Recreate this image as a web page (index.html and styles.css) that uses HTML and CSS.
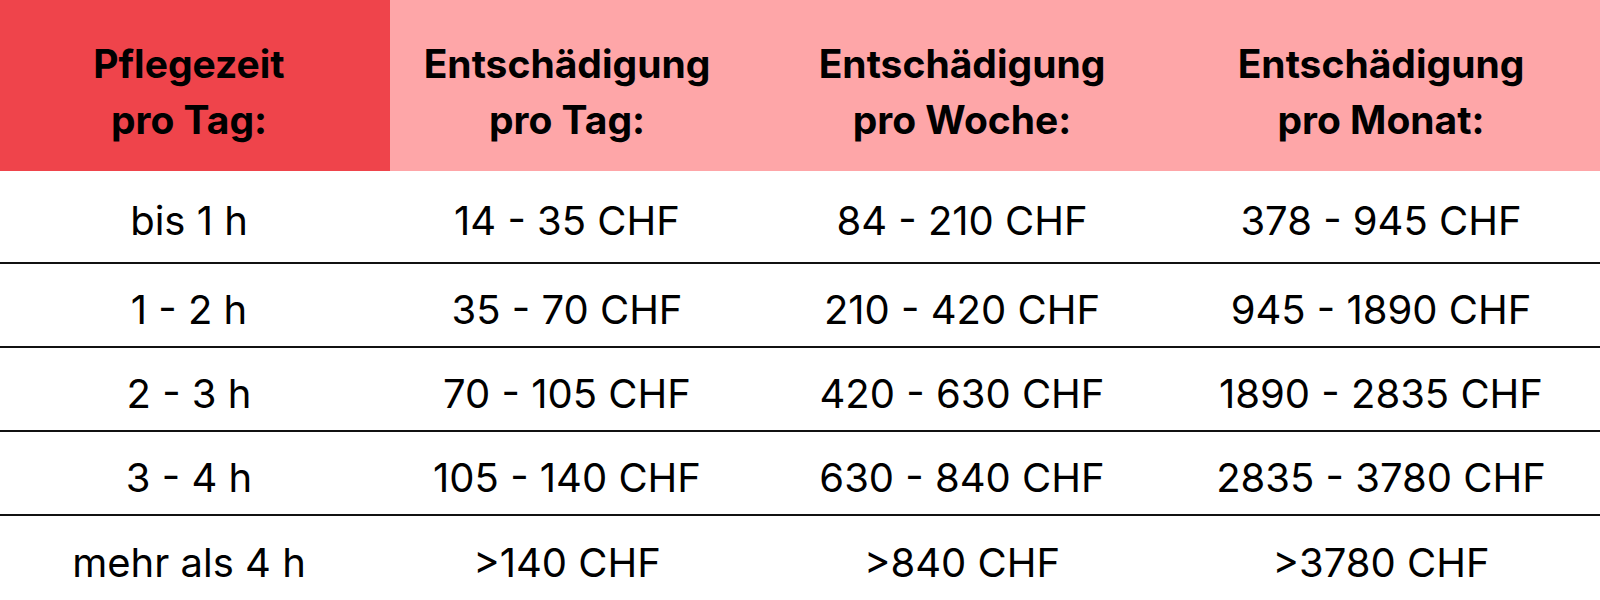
FILE: index.html
```html
<!DOCTYPE html>
<html lang="de">
<head>
<meta charset="utf-8">
<title>Entschädigung Pflegezeit</title>
<link rel="stylesheet" href="styles.css">
</head>
<body>
<div class="table">
  <div class="row head">
    <div class="cell c1 hot">Pflegezeit<br>pro Tag:</div>
    <div class="cell c2">Entschädigung<br>pro Tag:</div>
    <div class="cell c3">Entschädigung<br>pro Woche:</div>
    <div class="cell c4">Entschädigung<br>pro Monat:</div>
  </div>
  <div class="row first">
    <div class="cell c1">bis 1 h</div>
    <div class="cell c2">14 - 35 CHF</div>
    <div class="cell c3">84 - 210 CHF</div>
    <div class="cell c4">378 - 945 CHF</div>
  </div>
  <div class="row">
    <div class="cell c1">1 - 2 h</div>
    <div class="cell c2">35 - 70 CHF</div>
    <div class="cell c3">210 - 420 CHF</div>
    <div class="cell c4">945 - 1890 CHF</div>
  </div>
  <div class="row">
    <div class="cell c1">2 - 3 h</div>
    <div class="cell c2">70 - 105 CHF</div>
    <div class="cell c3">420 - 630 CHF</div>
    <div class="cell c4">1890 - 2835 CHF</div>
  </div>
  <div class="row">
    <div class="cell c1">3 - 4 h</div>
    <div class="cell c2">105 - 140 CHF</div>
    <div class="cell c3">630 - 840 CHF</div>
    <div class="cell c4">2835 - 3780 CHF</div>
  </div>
  <div class="row last">
    <div class="cell c1">mehr als 4 h</div>
    <div class="cell c2">&gt;140 CHF</div>
    <div class="cell c3">&gt;840 CHF</div>
    <div class="cell c4">&gt;3780 CHF</div>
  </div>
</div>
</body>
</html>
```
FILE: styles.css
```css
html, body {
  margin: 0;
  padding: 0;
  background: #ffffff;
}
body {
  width: 1600px;
  height: 600px;
  overflow: hidden;
  font-family: "Inter", "Liberation Sans", sans-serif;
  color: #000000;
}
.table {
  display: flex;
  flex-direction: column;
}
.row {
  display: grid;
  grid-template-columns: 390px 354px 436px 420px;
  height: 82px;
  border-top: 2px solid #111111;
  font-size: 40px;
  font-weight: 400;
}
.row.first {
  height: 91px;
  border-top: none;
}
.row.last {
  height: 84px;
}
.row .cell {
  padding-top: 8px;
}
.row.head {
  height: 171px;
  border-top: none;
  background: #fea6a8;
  font-size: 39px;
  font-weight: 700;
  line-height: 56px;
}
.row.head .cell {
  padding-top: 12px;
}
.cell {
  display: flex;
  align-items: center;
  justify-content: center;
  text-align: center;
  white-space: nowrap;
  box-sizing: border-box;
}
.row .c1 { padding-right: 12px; }
.row .c4 { padding-right: 18px; }
.row .hot {
  background: #ef444b;
}
```
